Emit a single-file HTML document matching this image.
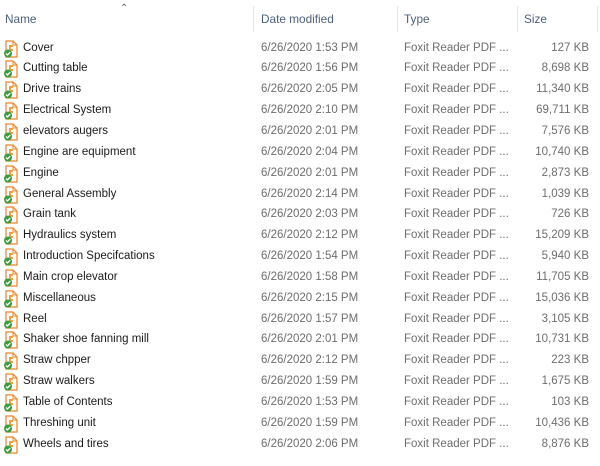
<!DOCTYPE html>
<html><head><style>
body{margin:0;width:600px;height:466px;background:#fff;font-family:"Liberation Sans",sans-serif;font-size:11.5px;position:relative;overflow:hidden}
.h{position:absolute;top:12px;color:#4c607a;font-size:11.8px}
.sep{position:absolute;top:6px;width:1px;height:26px;background:#e5e5e5}
.r{position:absolute;left:0;width:600px;height:21px;line-height:21px}
.n{position:absolute;left:23px;color:#1a1a1a}
.d{position:absolute;left:261px;color:#6d6d6d}
.t{position:absolute;left:404px;color:#6d6d6d}
.s{position:absolute;right:11px;color:#6d6d6d}
.i{position:absolute;left:3px;top:2px}
</style></head><body>
<div class="h" style="left:5px">Name</div>
<div style="position:absolute;left:120px;top:3px;color:#666;font-size:10px">&#8963;</div>
<div class="sep" style="left:253px"></div>
<div class="h" style="left:261px">Date modified</div>
<div class="sep" style="left:397px"></div>
<div class="h" style="left:404px">Type</div>
<div class="sep" style="left:517px"></div>
<div class="h" style="left:524px">Size</div>
<div class="sep" style="left:597px"></div>
<div id="rows"></div>
<script>
const d=[["Cover","1:53","127"],["Cutting table","1:56","8,698"],["Drive trains","2:05","11,340"],["Electrical System","2:10","69,711"],["elevators augers","2:01","7,576"],["Engine are equipment","2:04","10,740"],["Engine","2:01","2,873"],["General Assembly","2:14","1,039"],["Grain tank","2:03","726"],["Hydraulics system","2:12","15,209"],["Introduction Specifcations","1:54","5,940"],["Main crop elevator","1:58","11,705"],["Miscellaneous","2:15","15,036"],["Reel","1:57","3,105"],["Shaker shoe fanning mill","2:01","10,731"],["Straw chpper","2:12","223"],["Straw walkers","1:59","1,675"],["Table of Contents","1:53","103"],["Threshing unit","1:59","10,436"],["Wheels and tires","2:06","8,876"]];
const icon='<svg class="i" width="16" height="18" viewBox="0 0 16 18"><path d="M3 1h7l4 4v12H3z" fill="#fff" stroke="#e8832a" stroke-width="1.2"/><path d="M10 1v4h4" fill="none" stroke="#e8832a"/><path d="M6 5h4v2H8v2h2v2H8v3H6z" fill="#f0a040"/><circle cx="5" cy="13.5" r="4" fill="#3d9a3d"/><path d="M3 13.5l1.5 1.5 2.8-3" fill="none" stroke="#fff" stroke-width="1.3"/></svg>';
let h='';d.forEach((r,k)=>{h+=`<div class="r" style="top:${(37.5+k*20.85).toFixed(1)}px">${icon}<span class="n">${r[0]}</span><span class="d">6/26/2020 ${r[1]} PM</span><span class="t">Foxit Reader PDF ...</span><span class="s">${r[2]} KB</span></div>`});
document.getElementById('rows').innerHTML=h;
</script>
</body></html>
